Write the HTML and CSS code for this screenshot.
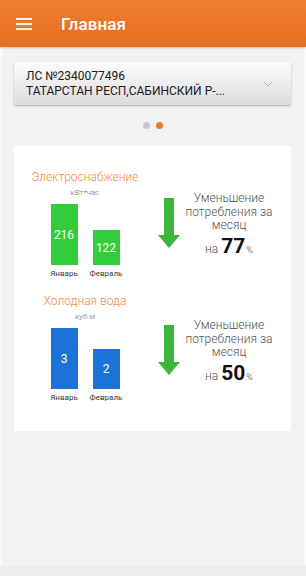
FILE: index.html
```html
<!DOCTYPE html>
<html lang="ru">
<head>
<meta charset="utf-8">
<title>Главная</title>
<link rel="stylesheet" href="styles.css">
</head>
<body>
<div class="app">
  <header class="topbar">
    <span class="burger"><i></i><i></i><i></i></span>
    <h1 class="title">Главная</h1>
  </header>
  <main class="content">
    <div class="select">
      <div class="select-text">
        <div>ЛС №2340077496</div>
        <div>ТАТАРСТАН РЕСП,САБИНСКИЙ Р-...</div>
      </div>
      <svg class="chev" width="10" height="6" viewBox="0 0 10 6"><path d="M1 1 L5 5 L9 1" fill="none" stroke="#b0b0b0" stroke-width="1"/></svg>
    </div>
    <div class="dots"><span class="dot"></span><span class="dot active"></span></div>
    <section class="card">
      <div class="row">
        <div class="chart">
          <div class="chart-title">Электроснабжение</div>
          <div class="unit">кВт*час</div>
          <div class="bars">
            <div class="bar-col"><div class="bar green" style="height:61px"><span class="val">216</span></div><div class="month">Январь</div></div>
            <div class="bar-col"><div class="bar green" style="height:35px"><span class="val">122</span></div><div class="month">Февраль</div></div>
          </div>
        </div>
        <div class="summary s1">
          <svg class="arrow" width="22" height="50" viewBox="0 0 22 50"><path d="M6 0 H16 V37 H22 L11 50 L0 37 H6 Z" fill="#3bb53b"/></svg>
          <div class="sum-text">
            <div>Уменьшение<br>потребления за<br>месяц</div>
            <div class="pct-line">на <b>77</b><small>%</small></div>
          </div>
        </div>
      </div>
      <div class="row">
        <div class="chart">
          <div class="chart-title">Холодная вода</div>
          <div class="unit">куб.м</div>
          <div class="bars">
            <div class="bar-col"><div class="bar blue" style="height:61px"><span class="val">3</span></div><div class="month">Январь</div></div>
            <div class="bar-col"><div class="bar blue" style="height:40px"><span class="val">2</span></div><div class="month">Февраль</div></div>
          </div>
        </div>
        <div class="summary s2">
          <svg class="arrow" width="22" height="50" viewBox="0 0 22 50"><path d="M6 0 H16 V37 H22 L11 50 L0 37 H6 Z" fill="#3bb53b"/></svg>
          <div class="sum-text">
            <div>Уменьшение<br>потребления за<br>месяц</div>
            <div class="pct-line">на <b>50</b><small>%</small></div>
          </div>
        </div>
      </div>
    </section>
  </main>
  <div class="bottom"></div>
</div>
</body>
</html>
```
FILE: styles.css
```css
* { box-sizing: border-box; }
html, body { margin: 0; padding: 0; }
body { font-family: Roboto, "Liberation Sans", Arial, sans-serif; background: #f2f1f3; }
.app { width: 306px; height: 576px; display: flex; flex-direction: column; background: #f2f1f3; overflow: hidden; }
.topbar { height: 47px; flex: none; display: flex; align-items: center; padding-left: 16px; background: linear-gradient(#ef7f33, #e66f1c); box-shadow: 0 1px 2px rgba(0,0,0,0.2); position: relative; z-index: 1; }
.burger { display: flex; flex-direction: column; gap: 3px; width: 16px; }
.burger i { display: block; height: 2px; background: #fff6e6; }
.title { margin: 0 0 0 29px; font-size: 17px; font-weight: 500; color: #fff; letter-spacing: 0.1px; }
.content { flex: 1; padding: 15px 13px 0 12px; border-left: 2px solid #fafafa; border-right: 2px solid #fafafa; }
.select { height: 43px; border-radius: 2px; background: linear-gradient(#fdfdfd, #dcdcdc); box-shadow: 0 1px 2px rgba(0,0,0,0.3); display: flex; align-items: center; padding: 0 18px 0 12px; }
.select-text { flex: 1; font-size: 12px; line-height: 15px; color: #1a1a1a; }
.chev { flex: none; }
.dots { height: 41px; display: flex; justify-content: center; align-items: center; gap: 6px; }
.dot { width: 7px; height: 7px; border-radius: 50%; background: #c8c8c8; }
.dot.active { background: #ef7a2a; }
.card { background: #fff; padding: 24px 0 0 0; height: 285px; }
.row { display: flex; height: 124px; }
.chart { width: 142px; display: flex; flex-direction: column; align-items: center; }
.chart-title { font-size: 12px; line-height: 14px; color: #f08a3e; font-weight: 300; }
.unit { font-size: 8px; line-height: 10px; color: #777; margin-top: 4px; font-weight: 300; }
.bars { display: flex; gap: 15px; align-items: flex-end; height: 81px; }
.bar-col { width: 27px; display: flex; flex-direction: column; align-items: center; }
.bar { width: 27px; display: flex; justify-content: center; align-items: center; }
.bar.green { background: #33cc3a; }
.bar.blue { background: #1b73d8; }
.val { color: #fff; font-size: 12px; }
.month { font-size: 8px; line-height: 10px; color: #333; margin-top: 4px; white-space: nowrap; }
.summary { display: flex; align-items: flex-start; padding-left: 2px; }
.s1 { padding-top: 28px; }
.s2 { padding-top: 31px; }
.arrow { flex: none; }
.sum-text { width: 88px; margin-left: 5px; margin-top: -6px; text-align: center; font-size: 12px; line-height: 13.5px; color: #555; font-weight: 300; white-space: nowrap; }
.pct-line { margin-top: 2px; line-height: 22px; }
.pct-line b { font-size: 21px; font-weight: 700; color: #111; }
.pct-line small { font-size: 9px; color: #444; margin-left: 1px; }
.bottom { height: 12px; flex: none; background: #eeeeee; border-top: 1px solid #f9f9f9; }
```
